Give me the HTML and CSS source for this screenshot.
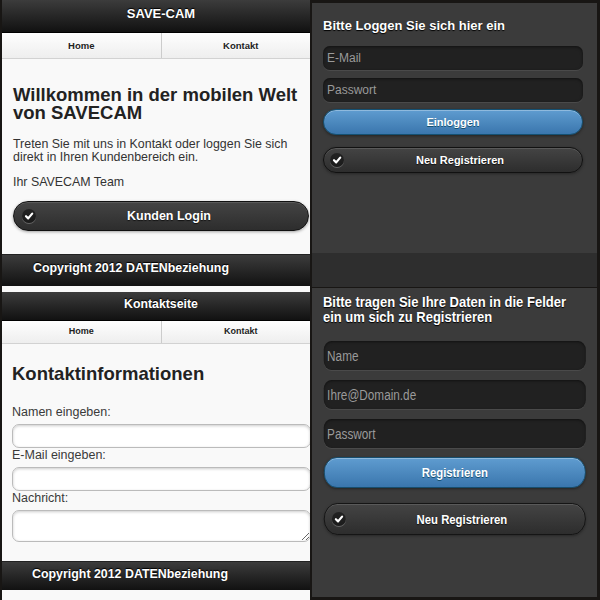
FILE: index.html
```html
<!DOCTYPE html>
<html lang="de">
<head>
  <meta charset="UTF-8" />
  <title>SAVE-CAM</title>
  <link rel="stylesheet" href="styles.css">
</head>
<body>
  <div class="collage">
    <div class="col col-left">
      <!-- Startseite -->
      <section class="phone light home">
        <header class="bar head">SAVE-CAM</header>
        <nav class="navbar">
          <a href="#">Home</a>
          <a href="#">Kontakt</a>
        </nav>
        <main class="content">
          <h2>Willkommen in der mobilen Welt von SAVECAM</h2>
          <p>Treten Sie mit uns in Kontakt oder loggen Sie sich direkt in Ihren Kundenbereich ein.</p>
          <p class="team">Ihr SAVECAM Team</p>
          <a href="#" class="btn btn-dark">
            <span class="check"><svg viewBox="0 0 10 10"><path d="M2 5.2 L4.2 7.4 L8.2 2.6" /></svg></span>
            Kunden Login
          </a>
        </main>
        <footer class="bar foot">Copyright 2012 DATENbeziehung</footer>
      </section>

      <!-- Kontaktseite -->
      <section class="phone light contact">
        <header class="bar head">Kontaktseite</header>
        <nav class="navbar">
          <a href="#">Home</a>
          <a href="#">Kontakt</a>
        </nav>
        <main class="content">
          <h2>Kontaktinformationen</h2>
          <label for="name">Namen eingeben:</label>
          <input id="name" type="text">
          <label for="mail">E-Mail eingeben:</label>
          <input id="mail" type="text">
          <label for="msg">Nachricht:</label>
          <textarea id="msg"></textarea>
        </main>
        <footer class="bar foot">Copyright 2012 DATENbeziehung</footer>
      </section>
    </div>

    <div class="col col-right">
      <!-- Login -->
      <section class="phone dark login">
        <main class="content">
          <h3>Bitte Loggen Sie sich hier ein</h3>
          <input type="text" placeholder="E-Mail">
          <input type="password" placeholder="Passwort">
          <a href="#" class="btn btn-blue">Einloggen</a>
          <a href="#" class="btn btn-dark">
            <span class="check"><svg viewBox="0 0 10 10"><path d="M2 5.2 L4.2 7.4 L8.2 2.6" /></svg></span>
            Neu Registrieren
          </a>
        </main>
        <div class="under"></div>
      </section>

      <!-- Registrierung -->
      <section class="phone dark register">
        <main class="content">
          <h3>Bitte tragen Sie Ihre Daten in die Felder ein um sich zu Registrieren</h3>
          <input type="text" placeholder="Name">
          <input type="text" placeholder="Ihre@Domain.de">
          <input type="password" placeholder="Passwort">
          <a href="#" class="btn btn-blue">Registrieren</a>
          <a href="#" class="btn btn-dark">
            <span class="check"><svg viewBox="0 0 10 10"><path d="M2 5.2 L4.2 7.4 L8.2 2.6" /></svg></span>
            Neu Registrieren
          </a>
        </main>
      </section>
    </div>
  </div>
</body>
</html>
```

FILE: styles.css
```css
* {
  box-sizing: border-box;
}

body {
  margin: 0;
  background: #181614;
  font-family: "Liberation Sans", Arial, sans-serif;
}

a {
  text-decoration: none;
}

.collage {
  width: 600px;
  height: 600px;
  display: flex;
  gap: 2px;
  padding-left: 2px;
  overflow: hidden;
}

.col {
  display: flex;
  flex-direction: column;
  overflow: hidden;
  flex: none;
}

.col-left {
  width: 308px;
}

.col-right {
  width: 285px;
  padding-top: 3px;
  gap: 1px;
}

.phone {
  display: flex;
  flex-direction: column;
  overflow: hidden;
  flex: none;
}

/* ---------- helle Seiten (320px breit, rechts abgeschnitten) ---------- */

.light {
  width: 318px;
  background: #f9f9f9;
  color: #222;
}

.bar {
  background: linear-gradient(#3c3c3c, #111);
  color: #fff;
  font-weight: bold;
  text-shadow: 0 -1px 1px #000;
  flex: none;
}

.head {
  text-align: center;
  border-bottom: 1px solid #000;
}

.navbar {
  display: flex;
  flex: none;
  border-bottom: 1px solid #d2d2d2;
}

.navbar a {
  flex: 1;
  text-align: center;
  color: #222;
  font-weight: bold;
  background: linear-gradient(#fefefe, #eee);
  text-shadow: 0 1px 0 #fff;
}

.navbar a + a {
  border-left: 1px solid #ccc;
}

.foot {
  border-top: 1px solid #222;
  font-size: 12.4px;
}

/* Startseite */

.home {
  height: 292px;
}

.home .head {
  height: 33px;
  line-height: 28px;
  font-size: 13px;
}

.home .navbar {
  height: 26px;
}

.home .navbar a {
  font-size: 9.5px;
  line-height: 25px;
}

.home .content {
  height: 195px;
  padding: 27px 11px 0;
}

.home h2 {
  margin: 0;
  font-size: 18.5px;
  line-height: 18px;
  color: #222;
}

.home p {
  margin: 16px 0 0;
  font-size: 12.4px;
  line-height: 12.5px;
  color: #333;
  width: 292px;
}

.home p.team {
  margin-top: 13px;
}

.home .btn {
  margin-top: 12px;
  height: 30px;
  font-size: 12.5px;
  padding-left: 16px;
}

.home .check {
  left: 8px;
}

.home .foot {
  height: 32px;
  line-height: 27px;
  padding-left: 31px;
}

/* Kontaktseite */

.contact {
  height: 308px;
}

.contact .head {
  height: 29px;
  line-height: 25px;
  font-size: 12.3px;
}

.contact .navbar {
  height: 23px;
}

.contact .navbar a {
  font-size: 9px;
  line-height: 21px;
}

.contact .content {
  height: 217px;
  padding: 21px 9px 0 10px;
  display: flex;
  flex-direction: column;
}

.contact h2 {
  margin: 0 0 22px;
  font-size: 18.5px;
  line-height: 18px;
}

.contact label {
  font-size: 12.5px;
  line-height: 14px;
  color: #3a3a3a;
  margin-bottom: 5px;
}

.contact input,
.contact textarea {
  height: 24px;
  border: 1px solid #bbb;
  border-radius: 7px;
  background: #fff;
  box-shadow: inset 0 1px 3px rgba(0, 0, 0, 0.2);
  margin: 0;
  resize: vertical;
  font: inherit;
}

.contact textarea {
  height: 32px;
}

.contact .foot {
  height: 29px;
  line-height: 24px;
  padding-left: 30px;
}

/* ---------- dunkle Seiten ---------- */

.dark {
  background: #3b3b3b;
  color: #fff;
}

.dark .content {
  display: flex;
  flex-direction: column;
}

.dark h3 {
  margin: 0;
  font-weight: bold;
  text-shadow: 0 1px 1px #000;
}

.dark input {
  border: none;
  border-radius: 7px;
  background: #212121;
  box-shadow: inset 0 1px 3px rgba(0, 0, 0, 0.5), 0 1px 0 #4a4a4a;
  color: #fff;
  font: inherit;
  padding: 0 0 0 4px;
}

.dark input::placeholder {
  color: #9a9a9a;
}

/* Login */

.login {
  height: 284px;
}

.login .content {
  height: 250px;
  padding: 15px 14px 0 11px;
}

.login h3 {
  font-size: 13px;
  line-height: 15px;
  margin-bottom: 13px;
}

.login input {
  height: 24px;
  font-size: 12px;
  margin-bottom: 8px;
}

.login .btn {
  height: 26px;
  font-size: 11px;
}

.login .btn-blue {
  margin-top: -1px;
}

.login .btn-dark {
  margin-top: 12px;
  padding-left: 14px;
}

.login .check {
  left: 6px;
}

.login .under {
  flex: 1;
  background: #2e2e2e;
}

/* Registrierung: schmal gestauchte Ansicht */

.register {
  height: 309px;
}

.register .content {
  width: 339px;
  padding: 6px 13px 0 14px;
  transform: scaleX(0.84);
  transform-origin: 0 0;
}

.register h3 {
  font-size: 15.5px;
  line-height: 15px;
  margin: 0 0 17px -1px;
}

.register input {
  height: 29px;
  font-size: 14px;
  border-radius: 9px;
  margin-bottom: 10px;
}

.register .btn {
  height: 31px;
  font-size: 13.5px;
  border-radius: 18px;
}

.register .btn-blue {
  margin-top: -1px;
}

.register .btn-dark {
  margin-top: 15px;
  height: 32px;
  padding-left: 17px;
}

.register .check {
  left: 10px;
  transform: scaleX(1.19);
}

/* ---------- Buttons ---------- */

.btn {
  position: relative;
  display: flex;
  align-items: center;
  justify-content: center;
  border-radius: 16px;
  color: #fff;
  font-weight: bold;
  text-shadow: 0 1px 1px #111;
  flex: none;
}

.btn-dark {
  background: linear-gradient(#444, #2d2d2d);
  border: 1px solid #111;
  box-shadow: 0 1px 3px rgba(0, 0, 0, 0.35), inset 0 1px 0 rgba(255, 255, 255, 0.12);
}

.btn-blue {
  background: linear-gradient(#5f9cd0, #3a76ad);
  border: 1px solid #145072;
  box-shadow: 0 1px 3px rgba(0, 0, 0, 0.4), inset 0 1px 0 rgba(255, 255, 255, 0.3);
  text-shadow: 0 1px 0 #145072;
}

.check {
  position: absolute;
  left: 10px;
  top: 50%;
  width: 14px;
  height: 14px;
  margin-top: -7px;
  border-radius: 50%;
  background: rgba(0, 0, 0, 0.45);
  box-shadow: 0 1px 0 rgba(255, 255, 255, 0.25);
  display: flex;
  align-items: center;
  justify-content: center;
}

.check svg {
  width: 10px;
  height: 10px;
  fill: none;
  stroke: #fff;
  stroke-width: 2.2;
  stroke-linecap: round;
  stroke-linejoin: round;
}
```
